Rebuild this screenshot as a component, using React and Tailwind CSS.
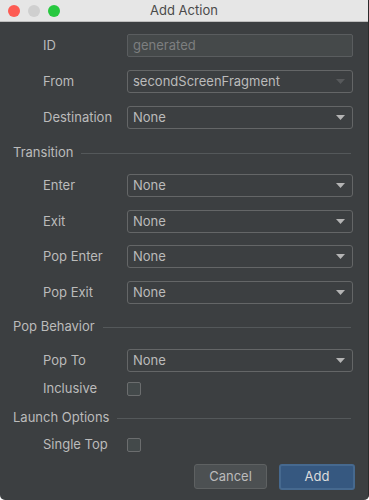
const font = { fontFamily: "Inter, 'Liberation Sans', sans-serif" };

const Arrow = ({ dim }) => (
  <svg width="9" height="5" viewBox="0 0 9 5" className="shrink-0">
    <path d="M0 0 H9 L4.5 5 Z" fill={dim ? "#57595b" : "#b4b4b4"} />
  </svg>
);

const Select = ({ value, disabled }) => (
  <div className="flex h-[23px] w-[226px] items-center justify-between rounded-[3px] border border-[#646667] bg-[#3c3f41] pl-[5px] pr-[7px]">
    <span className="text-[13px] text-[#bbbbbb]">{value}</span>
    <Arrow dim={disabled} />
  </div>
);

const Row = ({ label, children, className = "" }) => (
  <div className={`flex items-center ${className}`}>
    <span className="w-[127px] shrink-0 pl-[43px] text-[13px] text-[#bbbbbb] whitespace-nowrap">{label}</span>
    {children}
  </div>
);

const Checkbox = () => (
  <div className="h-[14px] w-[14px] rounded-[2px] border border-[#6b6d6e] bg-[#43494a]" />
);

const Section = ({ title, className = "" }) => (
  <div className={`flex h-[16px] items-center pl-[13px] pr-[17px] ${className}`}>
    <span className="text-[13px] text-[#bbbbbb]">{title}</span>
    <div className="ml-[8px] h-px flex-1 bg-[#54585a]" />
  </div>
);

export default function App() {
  return (
    <div className="min-h-screen bg-white" style={font}>
      <div className="h-[500px] w-[369px] overflow-hidden rounded-b-[5px] border-r border-[#2b2b2b] bg-[#3c3f41]">
        <div className="relative flex h-[22px] items-center justify-center border-b border-[#bdbdbd] bg-[#e6e6e6]">
          <div className="absolute left-[8px] top-[5px] flex gap-[8px]">
            <div className="h-[12px] w-[12px] rounded-full bg-[#fd5b53]" />
            <div className="h-[12px] w-[12px] rounded-full bg-[#cfcfcf]" />
            <div className="h-[12px] w-[12px] rounded-full bg-[#27c83f]" />
          </div>
          <span className="text-[13px] text-[#4a4a4a]">Add Action</span>
        </div>

        <div className="flex flex-col">
          <Row label="ID" className="mt-[12px] h-[23px]">
            <div className="flex h-[23px] w-[226px] items-center rounded-[2px] border border-[#5a5d5f] bg-[#45494a] pl-[5px]">
              <span className="text-[13px] text-[#7d7f80]">generated</span>
            </div>
          </Row>
          <Row label="From" className="mt-[13px] h-[23px]">
            <Select value="secondScreenFragment" disabled />
          </Row>
          <Row label="Destination" className="mt-[13px] h-[23px]">
            <Select value="None" />
          </Row>

          <Section title="Transition" className="mt-[16px]" />
          <Row label="Enter" className="mt-[13px] h-[23px]">
            <Select value="None" />
          </Row>
          <Row label="Exit" className="mt-[13px] h-[23px]">
            <Select value="None" />
          </Row>
          <Row label="Pop Enter" className="mt-[12px] h-[23px]">
            <Select value="None" />
          </Row>
          <Row label="Pop Exit" className="mt-[13px] h-[23px]">
            <Select value="None" />
          </Row>

          <Section title="Pop Behavior" className="mt-[15px]" />
          <Row label="Pop To" className="mt-[14px] h-[23px]">
            <Select value="None" />
          </Row>
          <Row label="Inclusive" className="mt-[10px] h-[14px]">
            <Checkbox />
          </Row>

          <Section title="Launch Options" className="mt-[14px]" />
          <Row label="Single Top" className="mt-[12px] h-[14px]">
            <Checkbox />
          </Row>

          <div className="mt-[12px] flex justify-end gap-[12px] pr-[13px]">
            <button className="h-[25px] w-[73px] rounded-[3px] border border-[#5e6162] bg-[#4c5052] text-[13px] text-[#bbbbbb]">
              Cancel
            </button>
            <button className="h-[26px] w-[76px] rounded-[3px] border-2 border-[#46698f] bg-[#365880] text-[13px] text-[#dcdcdc]">
              Add
            </button>
          </div>
        </div>
      </div>
    </div>
  );
}
